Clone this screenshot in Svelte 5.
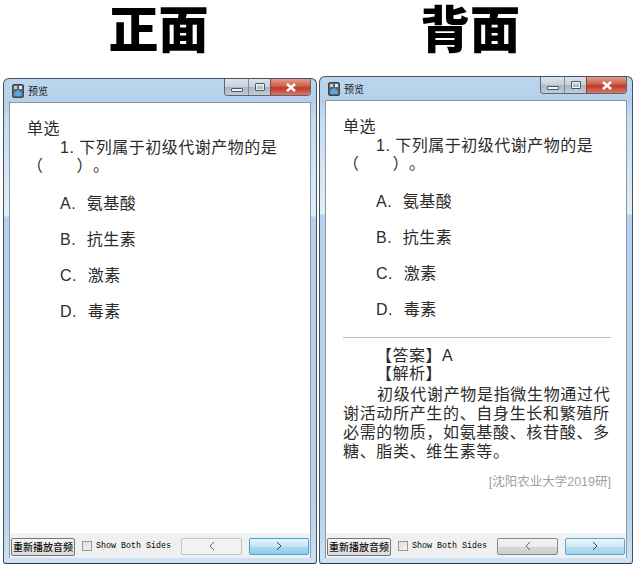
<script>
  const options = [
    ["A.", "氨基酸"],
    ["B.", "抗生素"],
    ["C.", "激素"],
    ["D.", "毒素"],
  ];
</script>

{#snippet preview(back)}
  <div class="window" class:back>
    <div class="titlebar">
      <svg class="appicon" viewBox="0 0 12 14" width="12" height="14">
        <rect x="0.5" y="0.5" width="11" height="13" rx="1.5" fill="#5c6670" stroke="#3c444c" />
        <rect x="2" y="2" width="3" height="3" fill="#c8ccd0" />
        <rect x="7" y="2" width="3" height="3" fill="#e8eaec" />
        <path d="M2.5 12V8.5L6 6l3.5 2.5V12z" fill="#5aa9e6" />
      </svg>
      <span class="title">预览</span>
      <div class="controls">
        <div class="ctl min"><i></i></div>
        <div class="ctl max"><i></i></div>
        <div class="ctl close">
          <svg viewBox="0 0 12 9" width="12" height="9">
            <path d="M2 1l8 7M10 1L2 8" stroke="#fff" stroke-width="2.4" />
          </svg>
        </div>
      </div>
    </div>
    <div class="client">
      <div class="body">
        <div class="kind">单选</div>
        <div class="stem">1. 下列属于初级代谢产物的是（　　）。</div>
        <div class="options">
          {#each options as [key, text]}
            <div class="option"><span class="key">{key}</span>{text}</div>
          {/each}
        </div>
        {#if back}
          <hr />
          <div class="answer">
            <p class="ind">【答案】A</p>
            <p class="ind">【解析】</p>
            <p class="para">初级代谢产物是指微生物通过代谢活动所产生的、自身生长和繁殖所必需的物质，如氨基酸、核苷酸、多糖、脂类、维生素等。</p>
            <p class="source">[沈阳农业大学2019研]</p>
          </div>
        {/if}
      </div>
      <div class="bottom">
        <button class="replay">重新播放音频</button>
        <span class="check"></span>
        <span class="both">Show Both Sides</span>
        <button class="nav prev">
          <svg viewBox="0 0 8 10" width="8" height="10"><path d="M6 1L2 5l4 4" fill="none" stroke="#666" /></svg>
        </button>
        <button class="nav next">
          <svg viewBox="0 0 8 10" width="8" height="10"><path d="M2 1l4 4-4 4" fill="none" stroke="#444" /></svg>
        </button>
      </div>
    </div>
  </div>
{/snippet}

<div class="page">
  <section class="col">
    <h1>正面</h1>
    {@render preview(false)}
  </section>
  <section class="col right">
    <h1>背面</h1>
    {@render preview(true)}
  </section>
</div>

<style>
  :global(body) {
    margin: 0;
    background: #fff;
  }

  .page {
    display: flex;
    width: 639px;
    height: 568px;
    padding-left: 3px;
    gap: 2px;
    box-sizing: border-box;
    font-family: "Liberation Sans", "Noto Sans CJK SC", sans-serif;
  }

  .col {
    width: 314px;
    display: flex;
    flex-direction: column;
    height: 564px;
  }

  h1 {
    margin: 0;
    height: 78px;
    padding-right: 3px;
    box-sizing: border-box;
    text-align: center;
    font-family: "Noto Sans CJK SC", sans-serif;
    font-weight: 900;
    font-size: 50px;
    line-height: 52px;
    color: #000;
    flex: none;
  }

  .right h1 {
    height: 76px;
    padding-right: 12px;
  }

  .window {
    flex: 1;
    display: flex;
    flex-direction: column;
    border: 1px solid #46525e;
    border-bottom-color: #2e3740;
    border-radius: 6px 6px 3px 3px;
    background: linear-gradient(180deg, #bcd6ec 0, #b4d0e9 24px, #c6dcef 40px, #e2edf6 137px, #b6d2ec 138px, #b8d4ec 440px, #cfe2f3 100%);
    padding: 0 5px 5px;
    box-sizing: border-box;
  }

  .titlebar {
    height: 23px;
    display: flex;
    align-items: center;
    position: relative;
    flex: none;
    padding-left: 3px;
  }

  .appicon {
    margin-right: 4px;
  }

  .title {
    font-family: "Noto Sans CJK SC", sans-serif;
    font-size: 10px;
    color: #1a1a1a;
  }

  .controls {
    position: absolute;
    right: 0;
    top: 0;
    display: flex;
    height: 17px;
    box-sizing: border-box;
    border: 1px solid #5a6672;
    border-top: none;
    border-radius: 0 0 4px 4px;
    overflow: hidden;
  }

  .ctl {
    display: flex;
    align-items: center;
    justify-content: center;
    height: 100%;
    box-sizing: border-box;
    background: linear-gradient(180deg, #dbe3ea, #c6d1db 50%, #aab6c2 52%, #c2ccd6);
  }

  .min {
    width: 24px;
    border-right: 1px solid #7f8d9a;
  }

  .min i {
    display: block;
    width: 10px;
    height: 2px;
    margin-top: 6px;
    background: #eef3f7;
    border: 1px solid #4c5a68;
    border-radius: 1px;
  }

  .max {
    width: 22px;
    border-right: 1px solid #7f4a40;
  }

  .max i {
    display: block;
    width: 8px;
    height: 6px;
    border: 1px solid #4c5a68;
    outline: 1px solid #eef3f7;
    outline-offset: -2px;
    border-radius: 1px;
  }

  .close {
    width: 39px;
    background: linear-gradient(180deg, #e29c8c, #cf5f4c 45%, #bd3a26 55%, #d8786a);
  }

  .client {
    flex: 1;
    display: flex;
    flex-direction: column;
    border: 1px solid #8a9aa8;
    border-bottom: none;
    background: #fff;
    min-height: 0;
  }

  .body {
    flex: 1;
    min-height: 0;
    padding: 17px 15px 0 17px;
    font-size: 16px;
    line-height: 18.5px;
    color: #2c2c2c;
    letter-spacing: 0.5px;
    text-spacing-trim: space-all;
  }

  .stem {
    text-indent: 33px;
    padding-right: 4px;
  }

  .options {
    margin-top: 18px;
    display: flex;
    flex-direction: column;
    gap: 16px;
    padding-left: 33px;
  }

  .option {
    height: 20px;
    line-height: 20px;
  }

  .key {
    display: inline-block;
    margin-right: 10.7px;
  }

  hr {
    margin: 17px 0 9px;
    border: none;
    border-top: 1px solid #bbb;
    height: 0;
  }

  .answer p {
    margin: 0;
  }

  .ind {
    text-indent: 33px;
  }

  .answer .para {
    margin-top: 1px;
    text-indent: 34px;
    line-height: 19.3px;
    letter-spacing: 0.67px;
  }

  .answer .source {
    margin-top: 11px;
    text-align: right;
    font-size: 12.5px;
    color: #a0a0a0;
    letter-spacing: 0;
  }

  .bottom {
    flex: none;
    height: 25px;
    background: #f0f0f0;
    display: flex;
    align-items: center;
    padding-bottom: 1px;
    box-sizing: border-box;
  }

  .replay {
    width: 64px;
    height: 18px;
    padding: 0;
    margin-left: 1px;
    margin-top: 3px;
    font-family: "Noto Sans CJK SC", sans-serif;
    font-size: 10px;
    font-weight: 500;
    line-height: 16px;
    color: #111;
    border: 1px solid #777;
    border-radius: 2px;
    background: linear-gradient(180deg, #f6f6f6, #dcdcdc);
    white-space: nowrap;
  }

  .check {
    width: 10px;
    height: 10px;
    box-sizing: border-box;
    margin: 2px 0 0 7px;
    border: 1px solid #999;
    background: linear-gradient(135deg, #ddd, #f4f4f4);
  }

  .both {
    margin: 2px 0 0 4px;
    width: 85px;
    font-family: "Liberation Mono", monospace;
    font-size: 8.33px;
    color: #000;
    white-space: nowrap;
  }

  .nav {
    height: 17px;
    margin-top: 2px;
    padding: 0;
    display: flex;
    align-items: center;
    justify-content: center;
    border-radius: 2px;
    box-sizing: border-box;
  }

  .prev {
    width: 61px;
    border: 1px solid #c4c4c4;
    background: #f2f2f2;
  }

  .back .prev {
    border-color: #8a8a8a;
    background: linear-gradient(180deg, #f4f4f4, #ebebeb 50%, #d6d6d6 52%, #cfcfcf);
  }

  .next {
    width: 60px;
    margin-left: 7px;
    border: 1px solid #35a8de;
    background: linear-gradient(180deg, #e6f4fb, #c4e4f6 50%, #a8d8f3 52%, #94cdec);
  }

  .back .next {
    border-color: #5aa7cc;
    background: linear-gradient(180deg, #eaf5fb, #cfe8f6 50%, #b4dcf2 52%, #a6d3ec);
  }
</style>
